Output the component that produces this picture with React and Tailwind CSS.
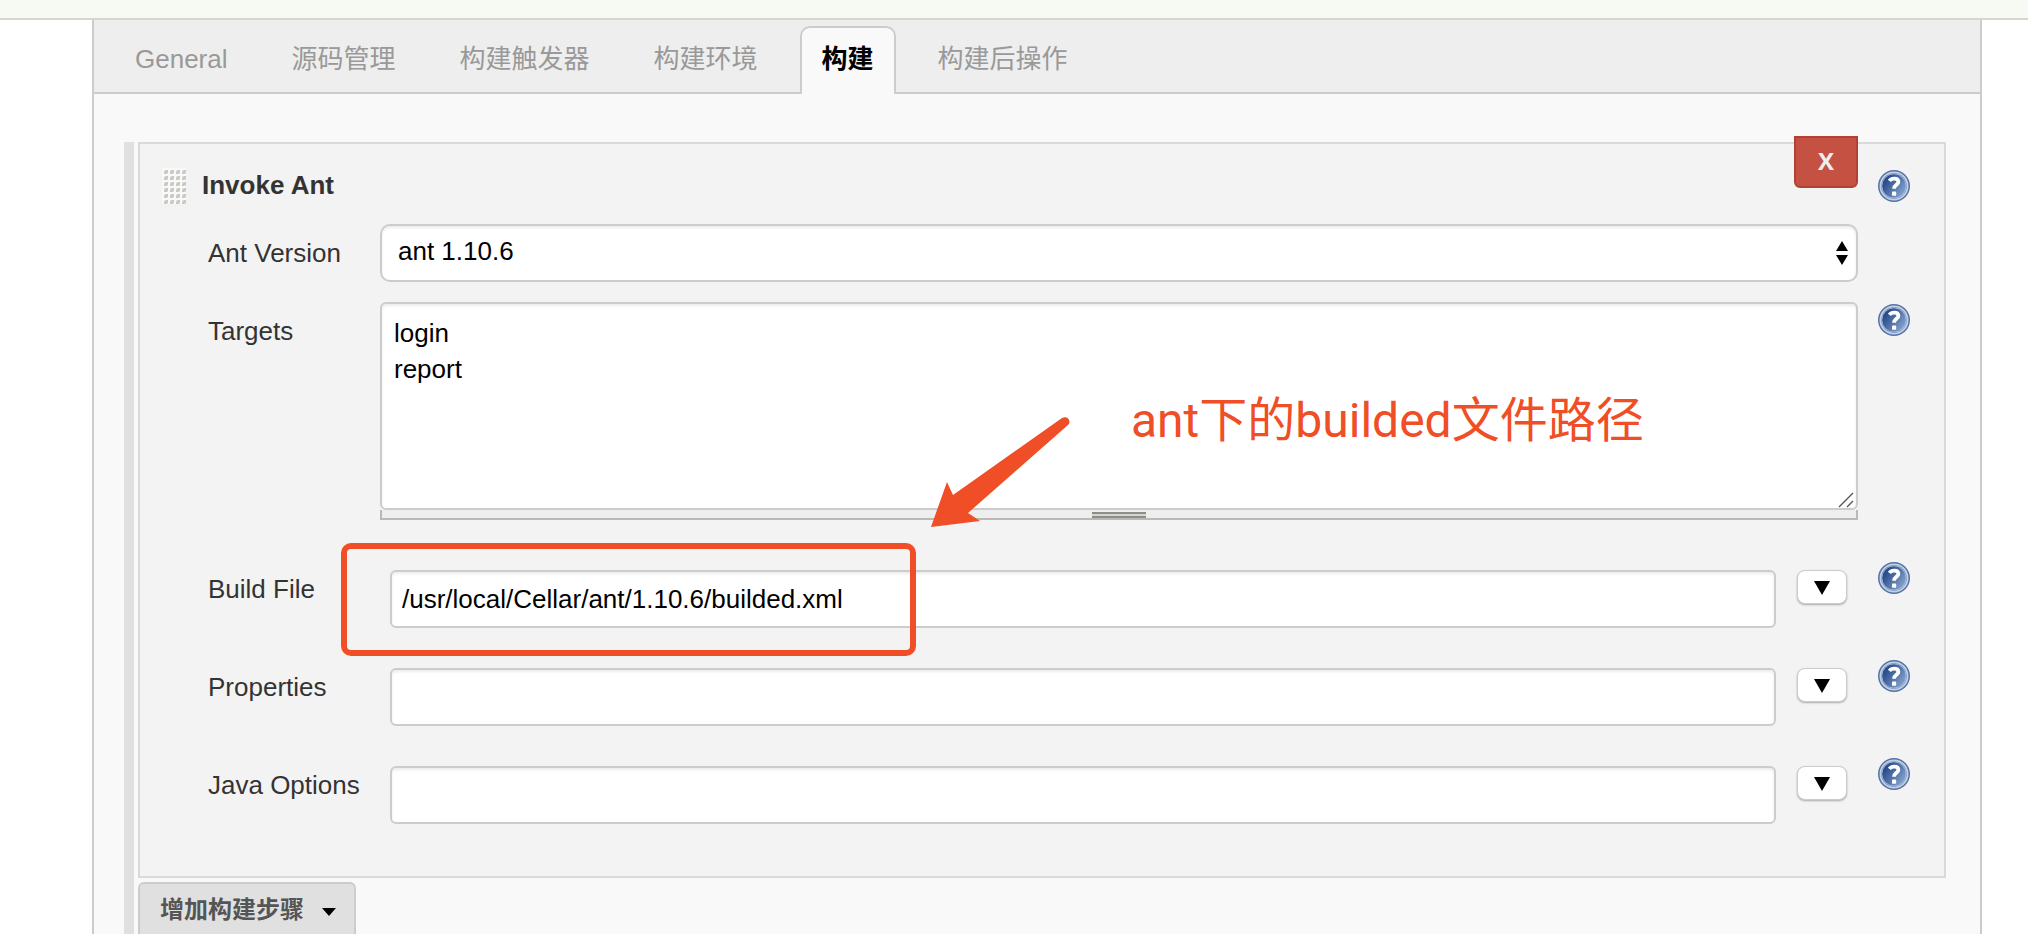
import React from 'react';

const tabs = ['General', '源码管理', '构建触发器', '构建环境', '构建', '构建后操作'];

const fieldClass =
  'border-2 border-[#ccc] bg-white text-black shadow-[inset_0_2px_3px_rgba(0,0,0,0.08)] outline-none';

function HelpButton({ className }) {
  return (
    <button type="button" aria-label="Help" className={`block size-8 shrink-0 ${className}`}>
      <svg viewBox="0 0 32 32" className="size-8">
        <defs>
          <linearGradient id="help-fill" x1="0" y1="0.2" x2="1" y2="0.9">
            <stop offset="0.15" stopColor="#2a4d8c" />
            <stop offset="0.95" stopColor="#8ba8d2" />
          </linearGradient>
        </defs>
        <circle cx="16" cy="16" r="16" fill="#5473a8" />
        <circle cx="16" cy="16" r="13.6" fill="none" stroke="#c3d0e4" strokeWidth="1.8" />
        <circle cx="16" cy="16" r="12.2" fill="url(#help-fill)" stroke="#b9c8e0" strokeWidth="0.8" />
        <path
          d="M11.4 10.8c1.2-1.6 2.7-2.2 4.7-2.2 2.7 0 4.3 1.2 4.3 3.3 0 3-4.4 2.9-4.4 6.9"
          fill="none"
          stroke="#fff"
          strokeWidth="3.8"
        />
        <rect x="14" y="21.6" width="4.2" height="4.2" rx="0.8" fill="#fff" />
      </svg>
    </button>
  );
}

function Grip() {
  return (
    <svg viewBox="0 0 24 36" className="h-9 w-6 shrink-0">
      <defs>
        <pattern id="grip-dots" width="6" height="6" patternUnits="userSpaceOnUse">
          <rect width="6" height="6" fill="#f9f9f8" />
          <rect x="2" y="2" width="4" height="4" fill="#dededb" />
          <path d="M2 6V4.5L4.5 2H6v2L4 6z" fill="#c6c6c2" />
        </pattern>
      </defs>
      <rect width="24" height="36" fill="url(#grip-dots)" />
    </svg>
  );
}

function ExpandableField({ id, label, value = '', children }) {
  return (
    <div className="flex items-start">
      <label htmlFor={id} className="w-[172px] shrink-0 pt-px">{label}</label>
      <div className="relative ml-[10px] flex min-w-0 flex-1 items-start">
        <input
          id={id}
          type="text"
          defaultValue={value}
          className={`h-[58px] min-w-0 flex-1 rounded-md px-[10px] ${fieldClass}`}
        />
        {children}
      </div>
      <button
        type="button"
        aria-label={`Expand ${label}`}
        className="mr-[11px] ml-[21px] flex h-[34px] w-[50px] shrink-0 items-center justify-center rounded-lg border border-[#ccc] bg-white pt-0.5 shadow-[0_1px_2px_rgba(0,0,0,0.3)]"
      >
        <svg viewBox="0 0 16 14" className="h-[14px] w-4">
          <path d="M0 0h16L8 14z" />
        </svg>
      </button>
      <HelpButton className="-mt-2 ml-5" />
    </div>
  );
}

export default function App() {
  return (
    <div className="flex h-screen flex-col overflow-hidden bg-white font-['Liberation_Sans','Noto_Sans_CJK_SC',sans-serif] text-[26px] leading-9 text-[#333]">
      <div className="h-5 shrink-0 border-b-2 border-[#d3d7cf] bg-[#f6faf2]" />
      <main className="mr-[46px] ml-[92px] flex-1 border-x-2 border-[#ccc] bg-[#f9f9f9]">
        <nav className="flex h-[74px] items-end gap-5 border-b-2 border-[#ccc] bg-[#eee] pl-[19px]">
          {tabs.map((tab) => (
            <a
              key={tab}
              href="#"
              className={
                tab === '构建'
                  ? '-mb-0.5 h-[68px] rounded-t-[10px] border-2 border-b-0 border-[#ccc] bg-[#f9f9f9] px-5 pt-[13px] font-bold text-black'
                  : '-mb-0.5 h-[68px] px-[22px] pt-[15px] text-[#999]'
              }
            >
              {tab}
            </a>
          ))}
        </nav>

        <form className="mt-12 mr-[34px] ml-[30px] border-l-[10px] border-[#e0e0e0] pl-1">
          <section className="relative border-2 border-[#d9d9d9] bg-[#f3f3f3] pt-6 pr-[34px] pb-[52px] pl-[68px]">
            <button
              type="button"
              className="absolute -top-2 right-[86px] h-[52px] w-16 rounded-b-md border-2 border-[#b04134] bg-[#c45142] pb-0.5 font-['Open_Sans',sans-serif] text-2xl font-bold text-[#eee]"
            >
              X
            </button>

            <div className="-ml-[46px] flex items-start">
              <Grip />
              <h2 className="-mt-px ml-4 flex-1 font-bold">Invoke Ant</h2>
              <HelpButton className="mt-0.5" />
            </div>

            <div className="mt-5 flex items-start">
              <label htmlFor="ant-version" className="w-[172px] shrink-0 pt-[11px]">Ant Version</label>
              <div className="relative mr-[52px] min-w-0 flex-1">
                <select
                  id="ant-version"
                  className={`block h-[58px] w-full appearance-none rounded-[10px] px-4 pb-1 ${fieldClass}`}
                >
                  <option>ant 1.10.6</option>
                </select>
                <svg viewBox="0 0 12 24" className="pointer-events-none absolute top-[17px] right-[10px] h-6 w-3">
                  <path d="M6 0l6 10H0zM0 14h12L6 24z" />
                </svg>
              </div>
            </div>

            <div className="mt-5 flex items-start">
              <label htmlFor="targets" className="w-[172px] shrink-0 pt-[11px]">Targets</label>
              <div className="relative min-w-0 flex-1">
                <textarea
                  id="targets"
                  defaultValue={'login\nreport'}
                  className={`block h-[208px] w-full resize-none rounded-md px-3 pt-[11px] ${fieldClass}`}
                />
                <svg viewBox="0 0 16 16" className="pointer-events-none absolute right-1 bottom-3 size-4">
                  <path d="M1 15L15 1M9 15l6-6" stroke="#555" strokeWidth="1.4" />
                </svg>
                <div className="flex h-[10px] justify-center border-2 border-t-0 border-[#babab5] bg-[#eee]">
                  <div className="mt-0.5 h-1.5 w-[54px] border-y-2 border-[#8c8e8a] bg-[#d3d7cf]" />
                </div>

                <p className="pointer-events-none absolute top-[95px] left-[751px] font-['Roboto','Noto_Sans_CJK_SC',sans-serif] text-5xl whitespace-nowrap text-[#f04e26]">
                  ant下的builded文件路径
                </p>
                <svg viewBox="0 0 140 112" className="pointer-events-none absolute top-[113px] left-[551px] h-28 w-[140px]">
                  <path d="M0 112L16 67l6 13L131 3c5-3 10 3 6 7L37 98l12 8z" fill="#f04e26" />
                </svg>
              </div>
              <HelpButton className="mt-0.5 ml-5" />
            </div>

            <div className="mt-[50px] flex flex-col gap-10">
              <ExpandableField id="build-file" label="Build File" value="/usr/local/Cellar/ant/1.10.6/builded.xml">
                <div className="pointer-events-none absolute -top-[27px] -left-[49px] h-[113px] w-[575px] rounded-[10px] border-6 border-[#f04e26]" />
              </ExpandableField>
              <ExpandableField id="properties" label="Properties" />
              <ExpandableField id="java-options" label="Java Options" />
            </div>
          </section>

          <button
            type="button"
            className="mt-1 flex h-[60px] items-start gap-[18px] rounded-md border-2 border-[#ccc] bg-[#e0e0e0] pt-2 pr-[18px] pl-5 text-2xl leading-9 font-bold text-[#555]"
          >
            增加构建步骤
            <svg viewBox="0 0 14 8" className="mt-4 h-2 w-[14px]">
              <path d="M0 0h14L7 8z" fill="#000" />
            </svg>
          </button>
        </form>
      </main>
    </div>
  );
}
